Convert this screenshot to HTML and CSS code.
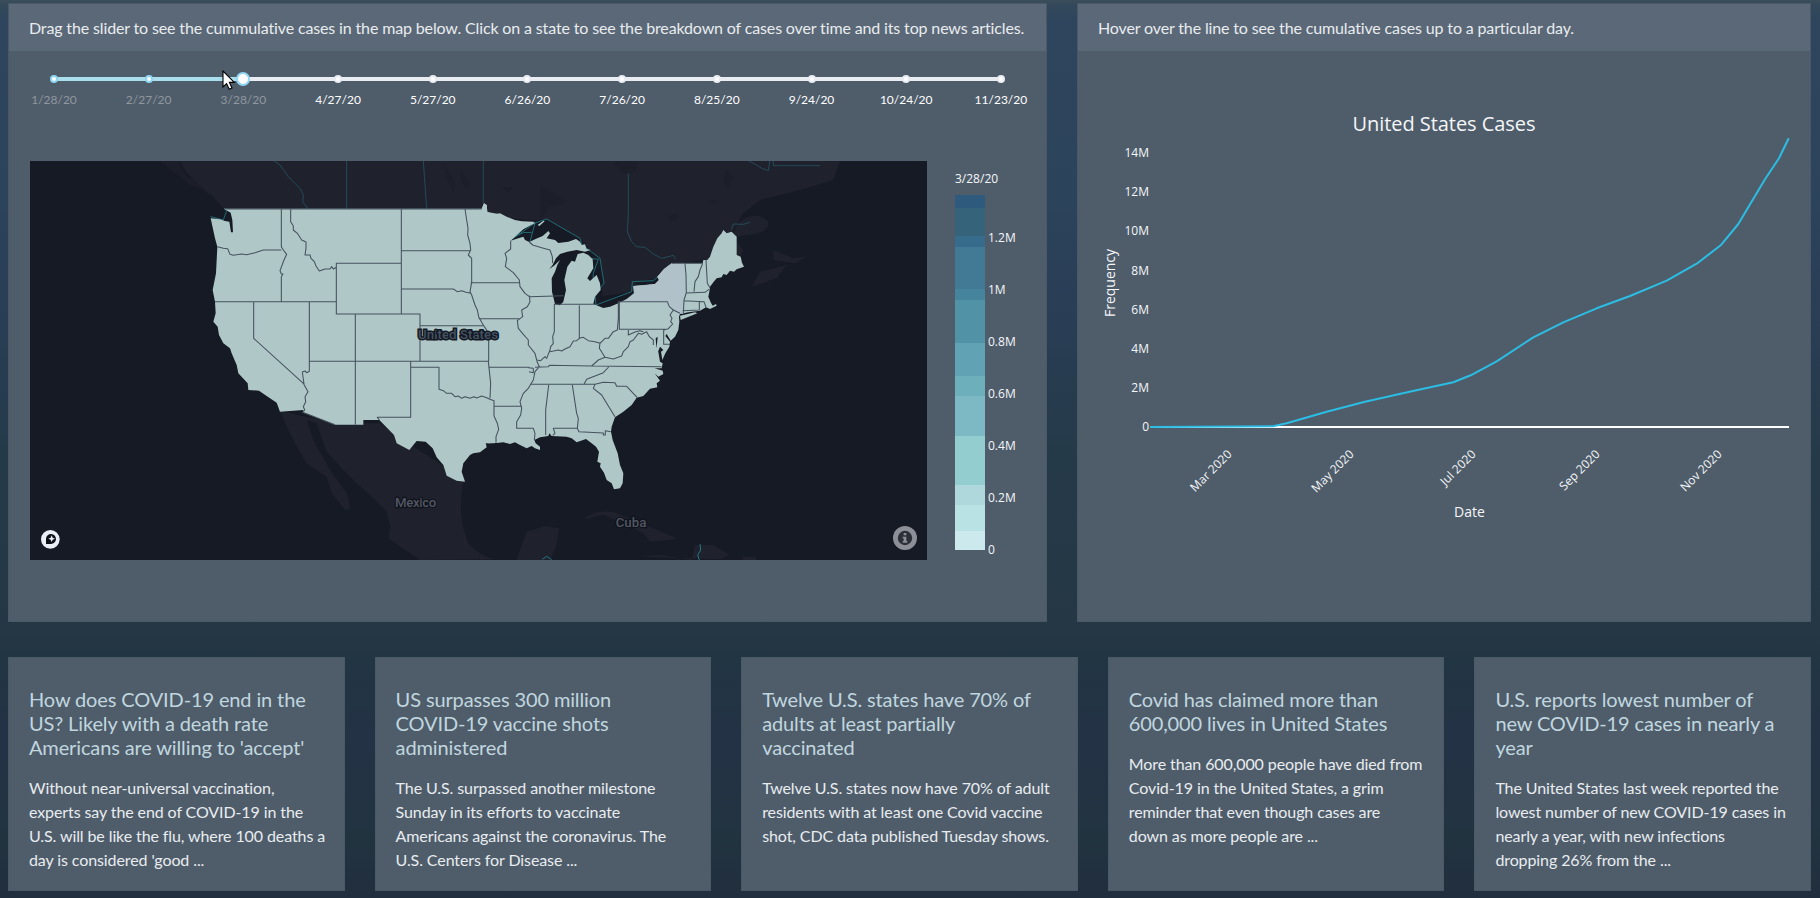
FILE: index.html
```html
<!DOCTYPE html>
<html lang="en">
<head>
<meta charset="utf-8">
<title>United States Cases</title>
<link rel="stylesheet" href="styles.css">
</head>
<body>
<main class="page">
  <section class="dashboard">
    <article class="card">
      <header class="card-header">Drag the slider to see the cummulative cases in the map below. Click on a state to see the breakdown of cases over time and its top news articles.</header>
      <div class="slider">
        <div class="track"><div class="fill"></div></div>
        <ol class="marks">
          <li class="mark done"><i></i><span>1/28/20</span></li>
          <li class="mark done"><i></i><span>2/27/20</span></li>
          <li class="mark done current"><i></i><span>3/28/20</span></li>
          <li class="mark"><i></i><span>4/27/20</span></li>
          <li class="mark"><i></i><span>5/27/20</span></li>
          <li class="mark"><i></i><span>6/26/20</span></li>
          <li class="mark"><i></i><span>7/26/20</span></li>
          <li class="mark"><i></i><span>8/25/20</span></li>
          <li class="mark"><i></i><span>9/24/20</span></li>
          <li class="mark"><i></i><span>10/24/20</span></li>
          <li class="mark"><i></i><span>11/23/20</span></li>
        </ol>
        <svg class="cursor" width="14" height="21" viewBox="0 0 14 21"><path d="M1 1V17L4.6 13.6L7.2 19.2L10 18L7.4 12.4H12.3Z" fill="#fff" stroke="#000" stroke-width="1.1"/></svg>
      </div>
      <div class="map-row">
        <svg class="map" width="897" height="399" viewBox="-450 33 2691 1197">
          <rect x="-450" y="33" width="2691" height="1197" fill="#161a24"/>
          <g fill="#1f222d">
            <path d="M0 33L20 70L60 105L95 135L132 178L920 200L1080 240L1130 300L1220 350L1260 380L1275 480L1380 450L1480 345L1590 325L1660 240L1690 190L1740 150L1860 120L1960 90L1980 33Z"/>
            <path d="M300 783L465 820H600L700 890L850 985Q830 1100 865 1180Q900 1220 945 1228L720 1230L625 1165L631 1130L620 1085L580 1045L520 990L490 960L440 905L410 820L380 810L400 870L450 960L500 1030L512 1075L495 1080L455 1030L440 980L380 940L345 880L320 830Z"/>
            <path d="M1040 1145L1095 1128L1138 1135L1128 1190L1110 1230H1010Z"/>
            <path d="M1575 330Q1630 265 1700 255Q1770 250 1765 215Q1730 180 1680 215Q1640 250 1690 300L1670 345ZM1715 410L1740 365L1820 345L1790 385ZM1780 300L1840 325L1880 320L1845 340L1780 330Z"/>
            <path d="M1212 1108Q1240 1078 1300 1086L1375 1115L1480 1160L1490 1168L1410 1175L1390 1150L1330 1120L1270 1095ZM1385 1220L1440 1214L1535 1230L1545 1185L1600 1185L1650 1215L1620 1228ZM1688 1220H1728V1230H1688Z"/>
            <path d="M-60 33H-5L20 82L60 90L100 145L70 120L30 105Z" opacity=".6"/>
          </g>
          <g fill="#161a24">
            <path d="M1300 33H1375L1365 62L1345 75L1320 65ZM1080 105L1165 155L1110 170L1080 210ZM790 40L825 100L822 130L800 85ZM840 60L870 100L860 120L845 95ZM1080 155L1108 165L1100 190L1082 180ZM1640 60L1660 80L1645 115L1630 100ZM1465 195L1490 190L1492 210L1470 212ZM965 110L1000 112L985 128ZM1580 150L1620 152L1600 165Z" opacity=".35"/>
            <path d="M920 187L990 205L1070 212L1100 207L1200 265L1230 300L1265 340L1270 405L1255 440L1355 425L1370 395L1435 385L1440 410L1350 475L1260 490L1150 478L1000 460L985 260Z"/>
          </g>
          <g fill="none" stroke="#245260" stroke-width="2.500">
            <path d="M282 33L300 45L325 80L345 100L360 115L370 135L368 155L384 176M500 33V176M730 33L740 176M910 33V160"/>
            <path d="M1345 70V190L1342 245L1355 275L1370 290L1395 292L1420 312L1445 325L1480 316L1487 328M1707 33L1730 45L1745 55L1765 62L1769 33M1780 33V47H1920M1655 238L1660 222L1690 223L1710 217"/>
          </g>
          <g fill="none" stroke="#237983" stroke-width="3">
            <path d="M132 176L140 182L130 210L92 200M992 270L1065 219L1100 207L1200 265L1205 283L1260 325L1272 400L1245 435L1248 465L1355 425L1357 395L1420 392L1437 378M1050 275L1065 219M1000 262L1030 248L1055 247M1230 325L1255 328L1240 370L1236 464" stroke-width="2.500"/>
            <path d="M1560 1182L1562 1200L1553 1215L1558 1230M1087 1228L1100 1219L1115 1229"/>
          </g>
          <g fill="#afc7c6">
            <path d="M132 176H905L912 160L920 165L922 186L960 193V877L945 878L925 880L917 878L920 892L900 907L880 910L870 915L858 930L850 940L845 965L855 995L830 992L800 977L790 945L770 922L758 895L737 875L710 873L700 885L688 900L650 880L642 855L598 810H550V824H465L368 787L370 780L300 785L290 758L260 738L237 722L205 720L203 700L175 670L170 645L155 610L150 595L130 580L117 555L113 530L100 515L107 490L105 455L98 420L108 370L112 290L105 265L92 205L120 208L135 213L148 215L153 247L159 247L157 210L152 188Z"/>
            <path d="M899 176L905 178L912 160L920 165L922 186L945 193L960 190L980 200L1005 210L1025 214L1060 215L1065 219L1030 238L992 272L1015 265L1030 260L1035 270L1048 276L1065 268L1088 258L1105 243L1110 250L1100 265L1125 270L1135 279L1165 275L1188 267L1200 275L1205 285L1215 283L1220 297L1232 300L1215 305L1190 300L1162 305L1140 312L1128 325L1118 345L1108 357L1122 347L1140 330L1132 345L1125 365L1115 385L1116 425L1125 462L1140 466L1150 455L1158 420L1153 390L1162 350L1175 332L1185 335L1193 312L1210 308L1225 315L1238 328L1240 355L1222 385L1230 393L1250 375L1260 400L1262 420L1245 440L1240 462L1270 474L1290 470L1315 460L1340 447L1362 430L1360 408L1400 405L1425 402L1437 390L1432 380L1452 357L1475 340H1568L1570 330L1582 330L1590 320L1600 290L1612 265L1625 250L1630 240L1640 250L1655 245L1670 260V315L1682 320L1686 338L1692 350L1670 358L1662 365L1650 362L1640 375L1630 372L1625 382L1610 385L1600 397L1590 410L1588 425L1585 440L1592 457L1598 467L1608 462L1610 467L1590 477L1578 472L1560 482L1525 487L1500 492L1497 500L1498 515L1495 540L1485 560L1472 572L1460 552L1456 558L1470 575L1468 590L1456 610L1447 630L1443 605L1450 600L1440 590L1434 605L1430 590L1433 560L1427 565L1429 590L1434 600L1440 635L1448 640L1445 655L1424 655L1448 662L1450 672L1435 680L1424 670L1440 692L1430 700L1432 712L1410 716L1390 738L1370 743L1355 765L1330 785L1305 802L1295 830L1293 845L1298 870L1313 910L1320 945L1330 970L1328 1000L1320 1015L1302 1018L1295 1000L1280 990L1272 968L1260 950L1262 940L1252 935L1257 905L1248 890L1235 880L1218 867L1190 877L1175 865L1160 860L1115 858L1108 850L1105 858L1080 862L1063 870L1067 880L1080 890V900L1065 895L1055 888L1040 895L1020 885L1005 877L990 882L970 877L940 880L915 880L899 907Z"/>
            <path d="M1500 497L1545 487L1552 490L1502 510ZM1073 225L1090 212L1094 214L1078 228Z"/>
          </g>
          <path fill="#b0c1ca" d="M1475 340H1515L1518 375L1520 428L1510 455V492L1482 480L1462 455H1337L1362 430L1360 408L1425 402L1437 390L1432 380L1452 357Z"/>
          <g fill="none" stroke="#45535f" stroke-width="3.200" stroke-linejoin="round">
            <path d="M137 177H905M304 177V290L310 300L320 313L312 330L300 362L304 372H309L304 380V455M105 455H470M112 290L130 295L143 296L150 313L160 316L185 312L200 314L225 308L250 300H304M332 177V215L340 228V240L352 250L365 270L378 276V295L375 315H390L393 325L403 335L408 348L418 363L435 357H450L455 350L460 357L469 352M469 455V340H664M664 177V492M469 340V492H720V634M526 492V824M221 455V565L370 700L384 725L375 740L377 755L370 770L374 780L368 787L465 824M388 455V664L380 668L375 663L367 666L372 702M388 634H925M664 302H872M855 177L860 210L864 235L863 255L870 280L872 300L865 315L875 325V397L870 425L875 435L885 465L892 480L896 500L905 517L913 530L920 540L926 570V634M664 417H820L832 425L845 422L858 427L872 430M720 527H912M872 398H1020M896 506H1018M925 634L932 700L930 745M692 634V802H592L598 810M692 652H777V718L790 722L800 730H815L825 740L835 738L845 745L855 740L870 745L882 740L890 744L905 738L920 743L930 748L942 752V798L952 820L956 838L948 860V878M925 652H1048M942 769H1025"/>
            <path d="M992 272V297L975 310L980 325L976 350L1000 368L1018 390L1020 410L1035 430L1048 440L1150 437M1048 276L1058 285L1085 293L1110 300L1117 320L1118 340M1048 437L1050 455L1042 470L1025 480L1028 500L1012 512L1015 535L1030 553L1045 570V585L1065 610L1070 630L1082 632L1095 620L1100 625L1110 600L1112 590L1120 580L1118 560L1123 545V463H1248M1198 466V565L1190 572L1180 573L1170 590L1155 597L1145 603L1135 600L1110 605M1198 565L1210 562L1225 572L1245 575L1260 580L1275 565H1285L1300 545L1312 540L1315 505V455H1337M1318 455V538H1455M1337 455H1462L1468 470L1480 480L1470 495L1476 505L1472 515L1478 522L1465 536L1451 540V583H1470M1480 480L1500 490M1070 632L1078 650L1065 665L1060 690L1045 715L1030 730L1020 755L1025 775L1022 795L1010 815V835H1060L1065 850L1063 870M1045 653L1060 655V668L1047 665M1065 652L1105 650L1108 646L1235 648L1445 650M1235 648L1255 630L1275 622L1258 595L1260 578M1275 622L1300 627L1325 618L1330 605L1345 590L1350 575L1360 570L1375 550L1385 553L1400 545L1408 560L1420 570V585M1345 540V555L1365 546L1380 542L1390 545M1286 651L1270 668L1245 678L1220 688L1212 703M1050 703H1245L1270 697L1305 698L1310 709H1340L1372 743M1245 703L1240 715L1265 735L1280 760L1305 800M1106 705L1097 780V855M1177 705L1190 790L1195 805L1192 835L1197 845L1270 849V855H1276V842L1292 845M1192 835H1120L1125 850L1118 856M1515 340L1518 375L1519 428L1512 450L1510 490M1568 340L1560 360L1555 380L1545 395L1542 425M1578 330L1582 400L1590 413M1519 429L1575 427L1587 418M1512 452L1572 455L1578 472M1558 455V480L1508 482M1475 340H1568"/>
          </g>
          <g class="map-label">
            <text x="834" y="567" text-anchor="middle" textLength="240" class="country">United States</text>
            <text x="707" y="1071" text-anchor="middle" textLength="124">Mexico</text>
            <text x="1353" y="1131" text-anchor="middle" textLength="92">Cuba</text>
          </g>
          <circle cx="-389" cy="1168" r="28" fill="#e9eef7"/>
          <path d="M-402 1182V1166A15 15 0 1 1 -387 1182Z" fill="#0c0f16"/>
          <path d="M-385 1156L-382 1163L-375 1166L-382 1169L-385 1176L-388 1169L-395 1166L-388 1163Z" fill="#e9eef7"/>
          <circle cx="2175" cy="1164" r="36" fill="#8c8f98"/>
          <circle cx="2175" cy="1164" r="21.500" fill="#2c2f36"/>
          <path d="M2171 1149H2179V1156H2171ZM2168 1160H2179V1173H2182V1178H2168V1173H2171V1165H2168Z" fill="#8c8f98"/>
        </svg>
        <div class="legend">
          <div class="legend-title">3/28/20</div>
          <div class="legend-body">
            <div class="scale"></div>
            <ul class="scale-ticks"><li>1.2M</li><li>1M</li><li>0.8M</li><li>0.6M</li><li>0.4M</li><li>0.2M</li><li>0</li></ul>
          </div>
        </div>
      </div>
    </article>
    <article class="card">
      <header class="card-header">Hover over the line to see the cumulative cases up to a particular day.</header>
      <svg class="chart" width="732" height="500" viewBox="1078 51 732 500">
        <text class="chart-title" x="1444" y="130.500" text-anchor="middle" textLength="183">United States Cases</text>
        <g class="ticks" text-anchor="end">
          <text x="1149" y="157">14M</text><text x="1149" y="196">12M</text><text x="1149" y="235">10M</text><text x="1149" y="275">8M</text><text x="1149" y="314">6M</text><text x="1149" y="353">4M</text><text x="1149" y="392">2M</text><text x="1149" y="431">0</text>
          <text transform="translate(1232.500 455) rotate(-45)">Mar 2020</text>
          <text transform="translate(1354.500 455) rotate(-45)">May 2020</text>
          <text transform="translate(1476.500 455) rotate(-45)">Jul 2020</text>
          <text transform="translate(1600.500 455) rotate(-45)">Sep 2020</text>
          <text transform="translate(1722.500 455) rotate(-45)">Nov 2020</text>
        </g>
        <text class="axis" x="1469.500" y="517" text-anchor="middle">Date</text>
        <text class="axis" transform="translate(1115 283) rotate(-90)" text-anchor="middle">Frequency</text>
        <path d="M1150 427H1789" stroke="#fff" stroke-width="2"/>
        <path class="series" d="M1150 427L1240 426.600L1273 426.200L1286.700 423.300L1326.700 411.700L1365 401.700L1413 391L1453.300 382.300L1470.700 375.300L1496.700 361.300L1533.300 337.300L1563.300 322.300L1596.700 308.300L1630 296L1666.700 280.700L1696.700 263.700L1720.700 245.300L1738.300 224L1765 179.300L1779 158.300L1788.700 138.300"/>
      </svg>
    </article>
  </section>
  <section class="news">
    <article class="card story"><h2>How does COVID-19 end in the US? Likely with a death rate Americans are willing to 'accept'</h2><p>Without near-universal vaccination, experts say the end of COVID-19 in the U.S. will be like the flu, where 100 deaths a day is considered 'good ...</p></article>
    <article class="card story"><h2>US surpasses 300 million<br>COVID-19 vaccine shots administered</h2><p>The U.S. surpassed another milestone Sunday in its efforts to vaccinate Americans against the coronavirus. The U.S. Centers for Disease ...</p></article>
    <article class="card story"><h2>Twelve U.S. states have 70% of adults at least partially<br>vaccinated</h2><p>Twelve U.S. states now have 70% of adult residents with at least one Covid vaccine shot, CDC data published Tuesday shows.</p></article>
    <article class="card story"><h2>Covid has claimed more than 600,000 lives in United States</h2><p>More than 600,000 people have died from Covid-19 in the United States, a grim reminder that even though cases are<br>down as more people are ...</p></article>
    <article class="card story"><h2>U.S. reports lowest number of new COVID-19 cases in nearly a year</h2><p>The United States last week reported the lowest number of new COVID-19 cases in nearly a year, with new infections<br>dropping 26% from the ...</p></article>
  </section>
</main>
</body>
</html>
```
FILE: styles.css
```css
* { box-sizing: border-box; }
body {
  margin: 0;
  height: 898px;
  overflow: hidden;
  background: linear-gradient(#3a4e5a 0, #34495a 4px, #2e455d 20px, #2c435c 200px, #293d54 330px, #253a49 450px, #253745 630px, #223543 660px, #233245 740px, #223340 840px, #212e3d 898px);
  color: #e8ecef;
  font: 16px/24px Lato, sans-serif;
}
.page { padding: 3px 9px 7px 8px; }
.dashboard {
  display: grid;
  grid-template-columns: 1039px 734px;
  gap: 30px;
  height: 619px;
}
.card { background: #4f5d6b; border: 1px solid #4a5966; }
.card-header {
  height: 47px;
  padding: 12px 20px;
  background: #5b6877;
  border-bottom: 1px solid #586a74;
  letter-spacing: -0.14px;
  white-space: nowrap;
}
.slider { position: relative; padding: 26px 45px 0; height: 110px; }
.track { height: 4px; background: #e9ecf0; border-radius: 2px; }
.fill { width: 20%; height: 100%; background: #a9dfed; border-radius: 2px; }
.marks {
  display: flex;
  justify-content: space-between;
  list-style: none;
  margin: -6px 0 0;
  padding: 0;
}
.mark {
  width: 0;
  display: flex;
  flex-direction: column;
  align-items: center;
  color: #fff;
  font-size: 12px;
  line-height: 18px;
}
.mark i {
  flex: none;
  width: 8px;
  height: 8px;
  border: 2px solid #e9ecf3;
  border-radius: 50%;
  background: #fff;
}
.mark span { margin-top: 8px; }
.done { color: #8f979f; }
.done i { border-color: #8ed6f3; }
.current i { width: 14px; height: 14px; margin: -3px 0; }
.cursor { position: absolute; left: 213px; top: 19px; }
.map-row { display: flex; gap: 28px; padding-left: 21px; }
.map { display: block; }
.map-label { font: 500 40px Roboto, sans-serif; fill: #525763; stroke: #10131c; stroke-width: 7px; paint-order: stroke; }
.map-label .country { fill: #44535f; stroke: #141926; stroke-width: 9px; }
.legend { padding-top: 10px; color: #f4f6f8; font: 12px/16px "Open Sans", sans-serif; }
.legend-title { height: 24px; }
.legend-body { display: flex; gap: 3px; }
.scale {
  width: 30px;
  height: 355px;
  background: linear-gradient(#2d5a7d 0 13px, #34637a 13px 41px, #376b8c 41px 52px, #427994 52px 94px, #46849e 94px 105px, #5192a7 105px 148px, #62a2b5 148px 181px, #6dafba 181px 201px, #7db9c5 201px 241px, #93cdcf 241px 290px, #afd8dc 290px 310px, #b9e2e4 310px 336px, #cceaed 336px);
}
.scale-ticks { list-style: none; margin: 35px 0 0; padding: 0; }
.scale-ticks li { height: 52px; }
.chart { display: block; }
.chart text { font-family: "Open Sans", sans-serif; fill: #f4f6f8; }
.chart-title { font-size: 20px; }
.ticks { font-size: 12px; }
.axis { font-size: 14px; }
.series { fill: none; stroke: #2bbde3; stroke-width: 2; stroke-linejoin: round; }
.news {
  display: grid;
  grid-template-columns: repeat(5, 1fr);
  gap: 30px;
  height: 234px;
  margin-top: 35px;
}
.story { padding: 29px 20px 0; }
.story h2 { margin: 0 0 17px; font-size: 20px; line-height: 24px; font-weight: 400; letter-spacing: -0.13px; color: #c0d6df; }
.story p { margin: 0 -4px 0 0; letter-spacing: -0.1px; }
```
